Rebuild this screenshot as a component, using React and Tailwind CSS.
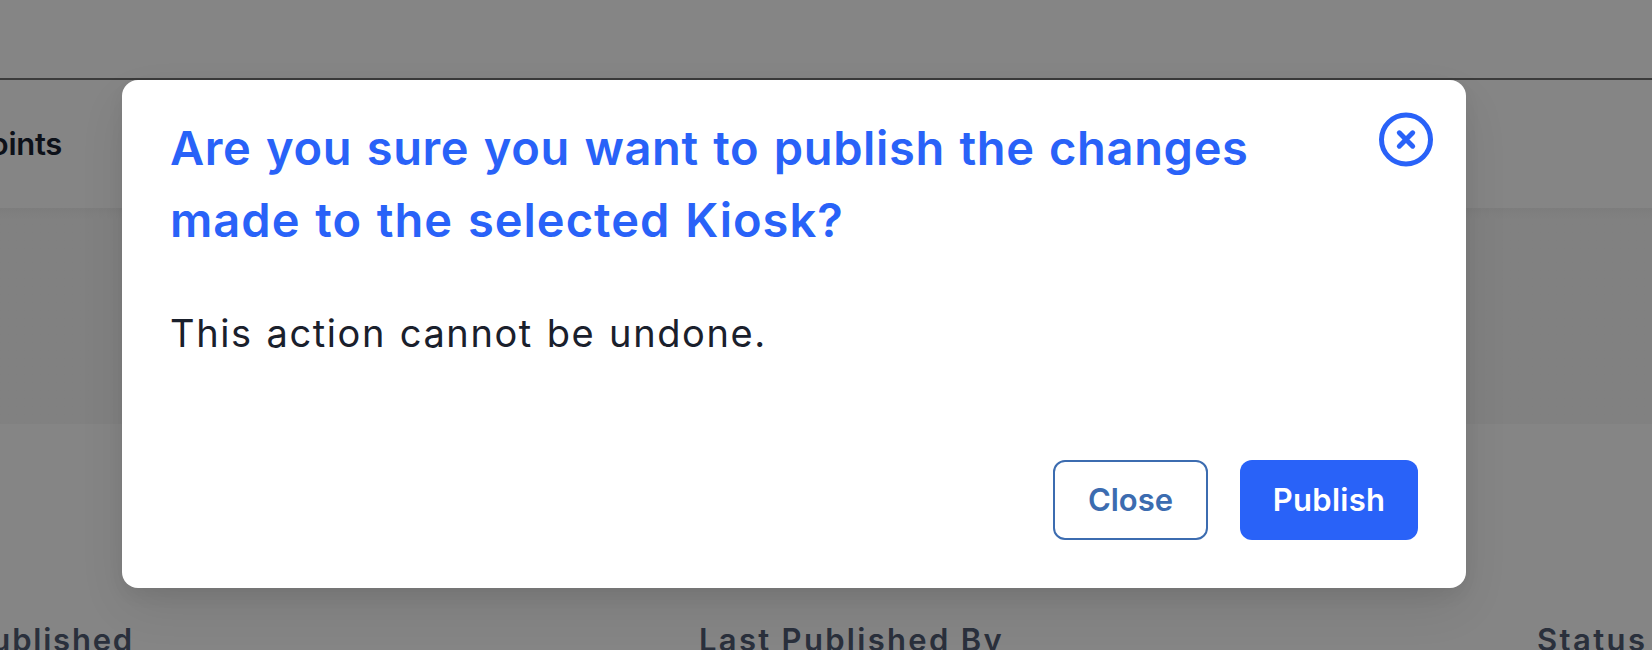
function CloseIcon() {
  return (
    <svg width="54" height="55" viewBox="0 0 54 55" fill="none" stroke="currentColor" strokeWidth="5">
      <circle cx="27" cy="27.5" r="24.5" />
      <path d="M20.3 20.8 L33.7 34.2 M33.7 20.8 L20.3 34.2" strokeLinecap="round" />
    </svg>
  );
}

function App() {
  return (
    <div className="relative h-[650px] w-full overflow-hidden bg-[#858585] font-['Inter',sans-serif]">
      {/* page behind the dialog */}
      <div className="flex h-full flex-col whitespace-nowrap">
        <div className="h-20 shrink-0 border-b-2 border-[#3b3b3b]" />
        <div className="flex h-32 shrink-0 items-center text-[#0d1119]">
          <span className="flex w-[62px] justify-end text-[31px] font-semibold tracking-[-0.3px]">points</span>
        </div>
        <div className="h-[216px] shrink-0 bg-[#818181] bg-linear-to-b from-[#7d7d7d] to-[#818181] to-[12px]" />
        <div className="flex h-[226px] shrink-0 items-end overflow-hidden text-[31px] leading-[36px] font-semibold text-[#2a303c]">
          <div className="flex w-[134px] translate-y-[8px] justify-end tracking-[1.8px]">Last Published</div>
          <div className="ml-[565px] w-[838px] translate-y-[8px] tracking-[2.3px]">Last Published By</div>
          <div className="translate-y-[8px] tracking-[2.4px]">Status</div>
        </div>
      </div>

      {/* dialog */}
      <div className="absolute inset-0 flex items-start justify-center pt-20 pr-16">
        <div className="flex h-[508px] w-[1344px] flex-col rounded-2xl bg-white p-12 pt-8 shadow-[0_20px_50px_-6px_rgba(0,0,0,0.1),0_8px_20px_-4px_rgba(0,0,0,0.08)]">
          <div className="flex items-start justify-between">
            <h2 className="text-[47px] leading-[72px] font-semibold tracking-[0.65px] whitespace-nowrap text-[#2962f8] [word-spacing:2px]">
              Are you sure you want to publish the changes
              <br />
              <span className="tracking-[1px]">made to the selected Kiosk?</span>
            </h2>
            <button className="-mr-[15px] text-[#2962f8]">
              <CloseIcon />
            </button>
          </div>
          <p className="mt-[47px] text-[38px] leading-[60px] tracking-[1.6px] text-[#1a202c] [word-spacing:1.5px]">
            This action cannot be undone.
          </p>
          <div className="mt-auto flex justify-end gap-8 text-[31px] font-semibold">
            <button className="h-20 w-[155px] rounded-xl border-2 border-[#3c6cb0] text-[#3c6cb0]">Close</button>
            <button className="h-20 w-[178px] rounded-xl bg-[#2962f8] tracking-[0.3px] text-white">Publish</button>
          </div>
        </div>
      </div>
    </div>
  );
}

export default App;
